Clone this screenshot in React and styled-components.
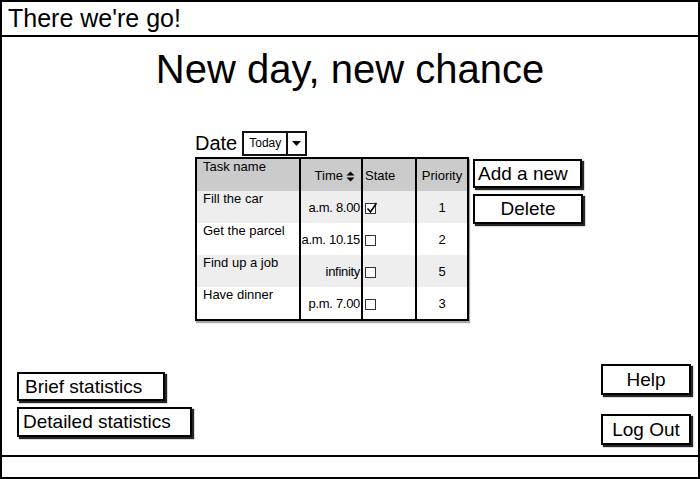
import styled, { createGlobalStyle } from 'styled-components';

const GlobalStyle = createGlobalStyle`
  html, body {
    margin: 0;
    padding: 0;
    background: #fff;
  }
  * {
    box-sizing: border-box;
  }
`;

const Frame = styled.div`
  width: 700px;
  height: 479px;
  border: 2px solid #000;
  display: flex;
  flex-direction: column;
  font-family: "Liberation Sans", Arial, sans-serif;
  color: #000;
  background: #fff;
  overflow: hidden;
`;

const TopBar = styled.header`
  height: 35px;
  flex-shrink: 0;
  border-bottom: 2px solid #000;
  padding-left: 6px;
  font-size: 25px;
  line-height: 33px;
`;

const BottomBar = styled.footer`
  height: 22px;
  flex-shrink: 0;
  border-top: 2px solid #000;
`;

const Main = styled.main`
  flex: 1;
  display: flex;
  flex-direction: column;
`;

const Heading = styled.h1`
  margin: 9px 0 0;
  font-size: 40px;
  font-weight: normal;
  line-height: 46px;
  text-align: center;
`;

const Workspace = styled.section`
  margin: 39px 0 0 193px;
  display: grid;
  grid-template-columns: auto auto;
  grid-template-rows: auto auto;
  column-gap: 4px;
  row-gap: 2px;
  justify-content: start;
`;

const DateRow = styled.div`
  grid-column: 1 / span 2;
  display: flex;
  align-items: center;
  gap: 5px;
  height: 24px;
  font-size: 20px;
`;

const Combo = styled.div`
  display: flex;
  height: 25px;
`;

const ComboValue = styled.div`
  width: 46px;
  border: 2px solid #111;
  font-size: 12px;
  display: flex;
  align-items: center;
  justify-content: center;
`;

const ComboArrow = styled.div`
  width: 19px;
  border: 2px solid #111;
  border-left: none;
  display: flex;
  align-items: center;
  justify-content: center;
`;

const Table = styled.div`
  display: grid;
  grid-template-columns: 102px 62px 54px 52px;
  grid-auto-rows: 32px;
  border: 2px solid #000;
  box-shadow: 1px 2px 1px rgba(0, 0, 0, 0.35);
  font-size: 13px;
`;

const Cell = styled.div`
  display: flex;
  padding: ${({ $top }) => ($top ? '0 6px' : '2px 2px 0')};
  align-items: ${({ $top }) => ($top ? 'flex-start' : 'center')};
  justify-content: ${({ $align }) =>
    $align === 'right' ? 'flex-end' : $align === 'center' ? 'center' : 'flex-start'};
  gap: 3px;
  line-height: 16px;
  background: ${({ $shade }) => $shade};
  border-left: ${({ $first }) => ($first ? 'none' : '2px solid #000')};
  white-space: nowrap;
`;

const TimeCell = styled(Cell)`
  justify-content: flex-end;
  padding: 2px ${({ $head }) => ($head ? 6 : 1)}px 0 0;
  letter-spacing: ${({ $head }) => ($head ? 0 : -0.3)}px;
`;

const Check = styled.span`
  width: 11px;
  height: 11px;
  border: 1px solid #333;
  background: #fff;
  position: relative;
  display: inline-block;
`;

const CheckMark = styled.svg`
  position: absolute;
  left: -1px;
  top: -3px;
`;

const ActionColumn = styled.div`
  display: flex;
  flex-direction: column;
  gap: 6px;
  margin-top: 2px;
`;

const Button = styled.button`
  width: ${({ $w }) => $w}px;
  height: ${({ $h }) => $h || 29}px;
  padding: 0 ${({ $pad }) => ($pad == null ? 6 : $pad)}px;
  border: 2px solid #000;
  background: #fff;
  box-shadow: 2px 2px 1px rgba(0, 0, 0, 0.85);
  font-family: "Liberation Sans", Arial, sans-serif;
  font-size: 19px;
  color: #000;
  text-align: ${({ $center }) => ($center ? 'center' : 'left')};
  white-space: nowrap;
  cursor: pointer;
`;

const Footer = styled.div`
  margin-top: auto;
  display: flex;
  justify-content: space-between;
  align-items: flex-end;
  padding: 0 7px 10px 15px;
`;

const FooterColumn = styled.div`
  display: flex;
  flex-direction: column;
  gap: ${({ $gap }) => $gap}px;
  padding-bottom: ${({ $drop }) => $drop || 0}px;
`;

const rows = [
  { name: 'Fill the car', time: 'a.m. 8.00', done: true, priority: 1 },
  { name: 'Get the parcel', time: 'a.m. 10.15', done: false, priority: 2 },
  { name: 'Find up a job', time: 'infinity', done: false, priority: 5 },
  { name: 'Have dinner', time: 'p.m. 7.00', done: false, priority: 3 },
];

const SortIcon = () => (
  <svg width="9" height="11" viewBox="0 0 9 11">
    <path d="M0.5 4.5 L4.5 0.5 L8.5 4.5 Z M0.5 6.5 L4.5 10.5 L8.5 6.5 Z" fill="#000" />
  </svg>
);

const Checkbox = ({ checked }) => (
  <Check>
    {checked && (
      <CheckMark width="14" height="14" viewBox="0 0 14 14">
        <path d="M2.5 7.5 L5.5 11 L11.5 2" fill="none" stroke="#000" strokeWidth="1.6" />
      </CheckMark>
    )}
  </Check>
);

const App = () => {
  const header = '#cbcbcb';
  return (
    <>
      <GlobalStyle />
      <Frame>
        <TopBar>There we're go!</TopBar>
        <Main>
          <Heading>New day, new chance</Heading>
          <Workspace>
            <DateRow>
              Date
              <Combo>
                <ComboValue>Today</ComboValue>
                <ComboArrow>
                  <svg width="9" height="5" viewBox="0 0 9 5">
                    <path d="M0 0 L9 0 L4.5 5 Z" fill="#000" />
                  </svg>
                </ComboArrow>
              </Combo>
            </DateRow>
            <Table>
              <Cell $first $top $shade={header}>Task name</Cell>
              <TimeCell $head $shade={header}>
                Time <SortIcon />
              </TimeCell>
              <Cell $shade={header}>State</Cell>
              <Cell $align="center" $shade={header}>Priority</Cell>
              {rows.map((r, i) => {
                const shade = i % 2 === 0 ? '#eeeeee' : '#ffffff';
                return [
                  <Cell key={`n${i}`} $first $top $shade={shade}>{r.name}</Cell>,
                  <TimeCell key={`t${i}`} $shade={shade}>{r.time}</TimeCell>,
                  <Cell key={`s${i}`} $shade={shade}><Checkbox checked={r.done} /></Cell>,
                  <Cell key={`p${i}`} $align="center" $shade={shade}>{r.priority}</Cell>,
                ];
              })}
            </Table>
            <ActionColumn>
              <Button $w={109} $pad={3}>Add a new</Button>
              <Button $w={110} $h={30} $center>Delete</Button>
            </ActionColumn>
          </Workspace>
          <Footer>
            <FooterColumn $gap={6} $drop={8}>
              <Button $w={148}>Brief statistics</Button>
              <Button $w={175} $h={30} $pad={4}>Detailed statistics</Button>
            </FooterColumn>
            <FooterColumn $gap={19}>
              <Button $w={90} $h={31} $center>Help</Button>
              <Button $w={90} $h={31} $center>Log Out</Button>
            </FooterColumn>
          </Footer>
        </Main>
        <BottomBar />
      </Frame>
    </>
  );
};

export default App;
